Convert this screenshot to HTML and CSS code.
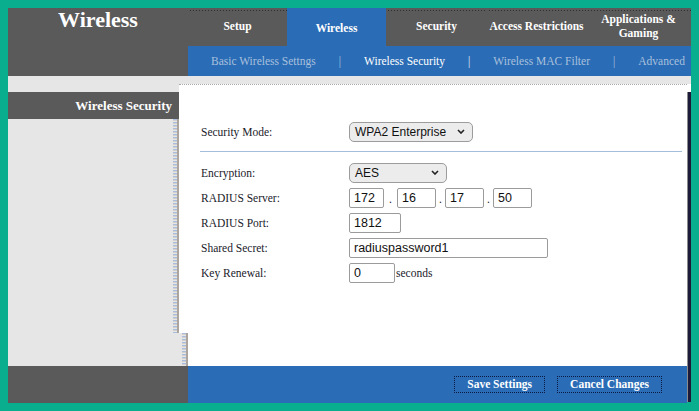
FILE: index.html
```html
<!DOCTYPE html>
<html lang="en">
<head>
<meta charset="utf-8">
<title>Wireless Security</title>
<link rel="stylesheet" href="styles.css">
</head>
<body>
<div class="frame">
  <div class="top">
    <div class="brand">Wireless</div>
    <div class="nav-col">
      <nav class="tabs">
        <div class="tab tab-setup">Setup</div>
        <div class="tab tab-wireless active">Wireless</div>
        <div class="tab tab-security">Security</div>
        <div class="tab tab-access">Access Restrictions</div>
        <div class="tab tab-apps">Applications &amp;<br>Gaming</div>
      </nav>
      <div class="subnav">
        <span class="sub">Basic Wireless Settngs</span>
        <span class="sep">|</span>
        <span class="sub current">Wireless Security</span>
        <span class="sep sep-light">|</span>
        <span class="sub">Wireless MAC Filter</span>
        <span class="sep">|</span>
        <span class="sub">Advanced</span>
      </div>
    </div>
  </div>

  <div class="lower">
    <div class="lower-main">
      <div class="content">
        <aside class="side">
          <div class="side-title">Wireless Security</div>
          <div class="side-body"></div>
          <div class="side-foot"></div>
        </aside>
        <section class="panel">
          <form class="form">
            <div class="row">
              <span class="label">Security Mode:</span>
              <span class="select select-wpa">WPA2 Enterprise
                <svg class="chev" width="8" height="5" viewBox="0 0 8 5"><path d="M1 1 L4 4 L7 1" fill="none" stroke="#222" stroke-width="1.6"/></svg>
              </span>
            </div>
            <div class="divider"></div>
            <div class="row">
              <span class="label">Encryption:</span>
              <span class="select select-aes">AES
                <svg class="chev" width="8" height="5" viewBox="0 0 8 5"><path d="M1 1 L4 4 L7 1" fill="none" stroke="#222" stroke-width="1.6"/></svg>
              </span>
            </div>
            <div class="row">
              <span class="label">RADIUS Server:</span>
              <input class="field octet octet-first" type="text" value="172">
              <span class="dot dot-first">.</span>
              <input class="field octet" type="text" value="16">
              <span class="dot">.</span>
              <input class="field octet" type="text" value="17">
              <span class="dot">.</span>
              <input class="field octet" type="text" value="50">
            </div>
            <div class="row">
              <span class="label">RADIUS Port:</span>
              <input class="field port" type="text" value="1812">
            </div>
            <div class="row">
              <span class="label">Shared Secret:</span>
              <input class="field secret" type="text" value="radiuspassword1">
            </div>
            <div class="row">
              <span class="label">Key Renewal:</span>
              <input class="field renewal" type="text" value="0">
              <span class="unit">seconds</span>
            </div>
          </form>
          <div class="panel-foot"><div class="notch"></div></div>
        </section>
      </div>
      <footer class="footer">
        <div class="foot-left"></div>
        <div class="foot-right">
          <button class="btn" type="button">Save Settings</button>
          <button class="btn" type="button">Cancel Changes</button>
        </div>
      </footer>
    </div>
    <div class="edge">
      <div class="edge-gray"></div>
      <div class="edge-white"></div>
      <div class="edge-dark"></div>
    </div>
  </div>
</div>
</body>
</html>
```

FILE: styles.css
```css
* { box-sizing: border-box; }

html, body {
  margin: 0;
  background: #08ae8e;
}

body {
  padding: 8px;
  font-family: "Liberation Serif", "Times New Roman", serif;
}

.frame {
  width: 683px;
  height: 395px;
  display: flex;
  flex-direction: column;
  overflow: hidden;
}

/* ---------- top area ---------- */
.top {
  display: flex;
  height: 68px;
  flex: none;
}

.brand {
  width: 180px;
  flex: none;
  background: #5a5a5a;
  color: #fff;
  font-weight: bold;
  font-size: 22px;
  line-height: 22px;
  text-align: center;
  padding-top: 1px;
}

.nav-col {
  flex: 1;
  display: flex;
  flex-direction: column;
  min-width: 0;
}

.tabs {
  height: 38px;
  display: flex;
  background: #5a5a5a;
}

.tab {
  width: 99px;
  flex: none;
  display: flex;
  align-items: center;
  justify-content: center;
  text-align: center;
  padding-bottom: 2px;
  color: #fff;
  font-weight: bold;
  font-size: 11.5px;
  line-height: 14px;
  background-image: repeating-linear-gradient(to right, #2e2e2e 0 1px, transparent 1px 3px);
  background-size: 100% 1px;
  background-position: 2px 2px;
  background-repeat: no-repeat;
}

.tab-security { width: 101px; }
.tab-apps { width: auto; flex: 1; }

.tab.active {
  background: #2a6cb5;
  padding-top: 1px;
  padding-bottom: 0;
}

.subnav {
  height: 30px;
  display: flex;
  align-items: center;
  background: #2a6cb5;
  padding-left: 23px;
  font-size: 11.5px;
  color: #a9c0de;
  white-space: nowrap;
  overflow: hidden;
}

.sub.current { color: #fff; }

.sep {
  margin: 0 23px;
  color: #a9c0de;
}

.sep-light { color: #e8eef7; }

/* ---------- lower area ---------- */
.lower {
  flex: 1;
  display: flex;
  min-height: 0;
}

.lower-main {
  flex: 1;
  display: flex;
  flex-direction: column;
}

.content {
  height: 290px;
  display: flex;
  background: #e6e6e6;
}

.side {
  width: 171px;
  flex: none;
  display: flex;
  flex-direction: column;
  padding-top: 16px;
}

.side-title {
  height: 27px;
  background: #5a5a5a;
  color: #fff;
  font-weight: bold;
  font-size: 13px;
  line-height: 27px;
  text-align: right;
  padding-right: 7px;
}

.side-body {
  flex: 1;
  display: flex;
  justify-content: flex-end;
}

.side-body::after,
.notch::after {
  content: "";
  width: 4px;
  background: repeating-linear-gradient(to bottom, #a9bede 0 1px, #d3cfcb 1px 2px, #e6e6e6 2px 3px);
  border-right: 2px solid #aca59d;
}

.side-foot { height: 33px; }

.panel {
  flex: 1;
  display: flex;
  flex-direction: column;
  margin-top: 8px;
  background: #fff;
  border-top: 1px dotted #a8a8a8;
}

.form {
  flex: 1;
  margin: 0;
  padding: 34px 5px 0 22px;
}

.row {
  display: flex;
  align-items: center;
  height: 25px;
}

.label {
  width: 148px;
  flex: none;
  font-size: 11.5px;
  color: #1a1a2a;
}

.divider {
  height: 1px;
  background: #a3bddc;
  margin: 7px 0 8px -1px;
}

.select {
  height: 20px;
  display: flex;
  align-items: center;
  justify-content: space-between;
  border: 1px solid #9c9c9c;
  border-radius: 5px;
  background: #ececec;
  padding: 0 7px 0 5px;
  font-family: "Liberation Sans", Arial, sans-serif;
  font-size: 12px;
  color: #111;
}

.select-wpa { width: 124px; }
.select-aes { width: 98px; }

.chev { flex: none; }

.field {
  height: 20px;
  margin: 0;
  border: 1px solid #9b9b9b;
  border-radius: 2px;
  padding: 0 4px;
  font-family: "Liberation Sans", Arial, sans-serif;
  font-size: 12.5px;
  color: #111;
  background: #fff;
  outline: none;
}

.octet { width: 39px; }
.octet-first { width: 35px; }

.dot {
  width: 9px;
  flex: none;
  text-align: center;
  font-size: 11.5px;
  color: #1a1a2a;
  align-self: flex-end;
  padding-bottom: 5px;
}

.dot-first { width: 13px; }

.port { width: 52px; }
.secret { width: 199px; }
.renewal { width: 46px; }

.unit {
  margin-left: 1px;
  font-size: 11.5px;
  color: #1a1a2a;
}

.panel-foot {
  height: 33px;
  display: flex;
}

.notch {
  width: 9px;
  display: flex;
  justify-content: flex-end;
  background: #e6e6e6;
}

/* ---------- footer ---------- */
.footer {
  flex: 1;
  display: flex;
}

.foot-left {
  width: 180px;
  flex: none;
  background: #5a5a5a;
}

.foot-right {
  flex: 1;
  display: flex;
  align-items: center;
  justify-content: flex-end;
  gap: 12px;
  padding-right: 25px;
  background: #2a6cb5;
}

.btn {
  height: 17px;
  margin: 0;
  padding: 0 12px;
  border: 1px dotted #0c1940;
  background: transparent;
  color: #fff;
  font-family: "Liberation Serif", "Times New Roman", serif;
  font-weight: bold;
  font-size: 11.5px;
  line-height: 15px;
}

/* ---------- right edge ---------- */
.edge {
  width: 4px;
  flex: none;
  display: flex;
  flex-direction: column;
}

.edge-gray { height: 8px; background: #e6e6e6; }
.edge-white { height: 8px; background: #fff; }
.edge-dark {
  flex: 1;
  background: #1e1b3a;
  border-left: 1px solid #8c8c8c;
  margin-bottom: 1px;
}
```
